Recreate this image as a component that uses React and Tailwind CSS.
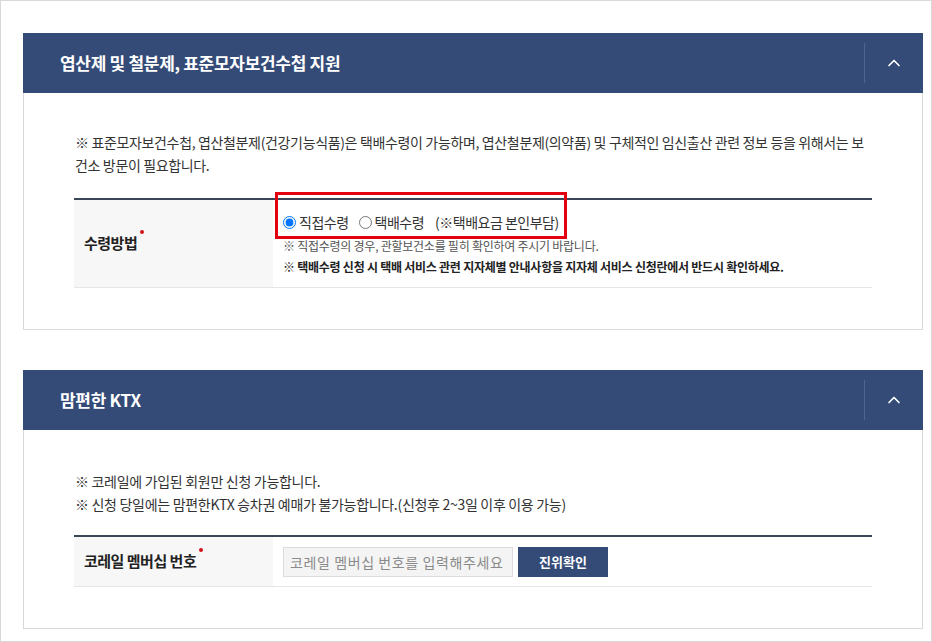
import { ChevronUp } from 'lucide-react';

const font = { fontFamily: '"Noto Sans CJK KR", "Noto Sans", sans-serif' };

const Header = ({ title }) => (
  <div className="-mx-px -mt-px h-[60px] bg-[#344b77] flex items-center">
    <h2 className="flex-1 pl-[37px] text-[17px] font-bold text-white tracking-[-0.3px]">{title}</h2>
    <div className="w-px h-[40px] bg-[#4d6592]" />
    <div className="w-[58px] flex items-center justify-center">
      <ChevronUp className="h-[20px] w-[20px] text-white" strokeWidth={2} />
    </div>
  </div>
);

const Label = ({ children }) => (
  <div className="w-[199px] shrink-0 bg-[#f7f7f7] flex items-center pl-[10px]">
    <span className="relative text-[15px] font-bold text-[#222] tracking-[-0.5px]">
      {children}
      <span className="absolute -right-[7px] top-[-2px] h-[4px] w-[4px] rounded-full bg-[#d3131b]" />
    </span>
  </div>
);

export default function App() {
  return (
    <div style={font} className="w-[932px] h-[642px] border border-[#d9d9d9] bg-white pl-[22px] pt-[32px] overflow-hidden">
      {/* 엽산제 카드 */}
      <section className="w-[900px] border border-[#d9d9d9]">
        <Header title="엽산제 및 철분제, 표준모자보건수첩 지원" />
        <div className="px-[50px] pb-[41px]">
          <p className="pt-[38px] pl-px text-[14px] leading-[23px] text-[#333] tracking-[-0.35px] whitespace-nowrap">
            ※ 표준모자보건수첩, 엽산철분제(건강기능식품)은 택배수령이 가능하며, 엽산철분제(의약품) 및 구체적인 임신출산 관련 정보 등을 위해서는 보
            <br />
            건소 방문이 필요합니다.
          </p>
          <div className="relative mt-[21px] border-t-2 border-[#3a4558] border-b border-b-[#e6e6e6] flex h-[90px]">
            <Label>수령방법</Label>
            <div className="flex-1 pl-[10px] pt-[11px]">
              <div className="flex items-center h-[22px] text-[14px] text-[#333] tracking-[-0.5px]">
                <label className="flex items-center gap-[3px]">
                  <input type="radio" name="recv" defaultChecked className="m-0 h-[13px] w-[13px]" />
                  직접수령
                </label>
                <label className="flex items-center gap-[3px] ml-[10px]">
                  <input type="radio" name="recv" className="m-0 h-[13px] w-[13px]" />
                  택배수령
                </label>
                <span className="ml-[11px]">(※택배요금 본인부담)</span>
              </div>
              <p className="mt-[2px] text-[12px] leading-[21px] text-[#555] tracking-[-0.25px]">
                ※ 직접수령의 경우, 관할보건소를 필히 확인하여 주시기 바랍니다.
              </p>
              <p className="text-[12px] leading-[21px] font-bold text-[#222] tracking-[-0.25px] whitespace-nowrap">
                ※ 택배수령 신청 시 택배 서비스 관련 지자체별 안내사항을 지자체 서비스 신청란에서 반드시 확인하세요.
              </p>
            </div>
            {/* 강조 표시 */}
            <div className="absolute left-[201px] top-[-8px] h-[47px] w-[292px] border-[3px] border-[#e3000f] pointer-events-none" />
          </div>
        </div>
      </section>

      {/* 맘편한 KTX 카드 */}
      <section className="mt-[40px] w-[900px] border border-[#d9d9d9]">
        <Header title="맘편한 KTX" />
        <div className="px-[50px] pb-[41px]">
          <div className="pt-[40px] pl-px text-[14px] leading-[23px] text-[#333] tracking-[-0.3px]">
            <p>※ 코레일에 가입된 회원만 신청 가능합니다.</p>
            <p>※ 신청 당일에는 맘편한KTX 승차권 예매가 불가능합니다.(신청후 2~3일 이후 이용 가능)</p>
          </div>
          <div className="mt-[19px] border-t-2 border-[#3a4558] border-b border-b-[#e6e6e6] flex h-[52px]">
            <Label>코레일 멤버십 번호</Label>
            <div className="flex-1 flex items-center pl-[10px] gap-[5px]">
              <input
                type="text"
                placeholder="코레일 멤버십 번호를 입력해주세요"
                className="h-[30px] w-[230px] border border-[#dcdcdc] bg-[#f4f4f4] px-[6px] text-[14px] tracking-[0.6px] text-[#333] placeholder:text-[#8a8a8a] outline-none"
              />
              <button className="h-[30px] w-[90px] bg-[#344b77] text-[13px] font-bold text-white">
                진위확인
              </button>
            </div>
          </div>
        </div>
      </section>
    </div>
  );
}
